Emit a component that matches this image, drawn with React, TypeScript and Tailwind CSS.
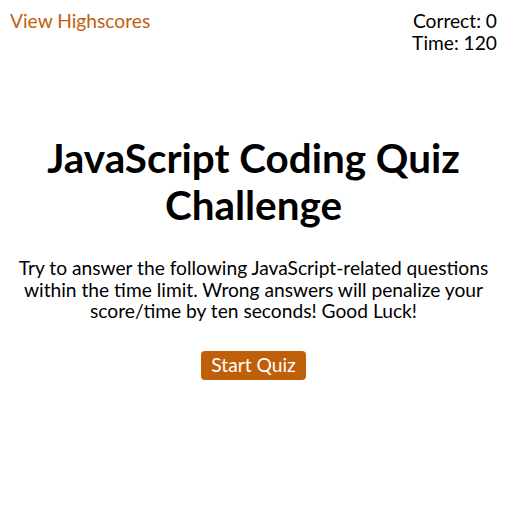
export default function App() {
  return (
    <div className="min-h-screen bg-white font-['Lato',sans-serif] text-black">
      <header className="flex items-start justify-between px-[10px] pt-[10px] text-[19.2px] leading-[22px]">
        <a href="#" className="text-[#c0600c]">
          View Highscores
        </a>
        <div className="text-right">
          <p>Correct: 0</p>
          <p>Time: 120</p>
        </div>
      </header>

      <main className="mx-auto flex max-w-[507px] flex-col items-center px-2 pt-[80px] text-center">
        <h1 className="text-[40.4px] font-bold leading-[47px]">JavaScript Coding Quiz Challenge</h1>
        <p className="mt-[29px] text-[19.2px] leading-[21.7px]">
          Try to answer the following JavaScript-related questions within the time limit. Wrong answers will
          penalize your score/time by ten seconds! Good Luck!
        </p>
        <button className="mt-[29px] rounded-[4px] bg-[#bf5f0a] px-[10px] pb-px text-[19.2px] leading-[28px] text-white">
          Start Quiz
        </button>
      </main>
    </div>
  );
}
